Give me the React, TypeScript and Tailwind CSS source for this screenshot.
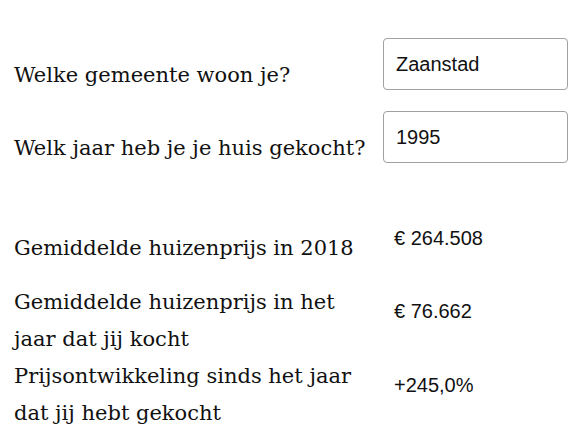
import React from 'react';

const serif = { fontFamily: '"DejaVu Serif", Georgia, serif' };

const results = [
  { label: ['Gemiddelde huizenprijs in 2018'], value: '€ 264.508', pb: 'pb-[20px]' },
  { label: ['Gemiddelde huizenprijs in het', 'jaar dat jij kocht'], value: '€ 76.662', pb: 'pb-[21px]' },
  { label: ['Prijsontwikkeling sinds het jaar', 'dat jij hebt gekocht'], value: '+245,0%', pb: 'pb-[20px]' },
];

export default function App() {
  return (
    <div className="w-[585px] h-[433px] bg-white overflow-hidden pl-[14px] pt-[38px] text-[#111]">
      <div className="flex flex-col gap-[21px]">
        <div className="flex items-start">
          <label className="w-[369px] h-[52px] pt-[19px] text-[21px] leading-[37px] whitespace-nowrap" style={serif}>
            Welke gemeente woon je?
          </label>
          <input
            readOnly
            value="Zaanstad"
            className="w-[185px] h-[52px] rounded-[4px] border border-[#a0a0a0] px-[12px] text-[20px] font-['Liberation_Sans',Arial,sans-serif] outline-none"
          />
        </div>
        <div className="flex items-start">
          <label className="w-[369px] h-[52px] pt-[19px] text-[21px] leading-[37px] whitespace-nowrap" style={serif}>
            Welk jaar heb je je huis gekocht?
          </label>
          <input
            readOnly
            value="1995"
            className="w-[185px] h-[52px] rounded-[4px] border border-[#a0a0a0] px-[12px] text-[20px] font-['Liberation_Sans',Arial,sans-serif] outline-none"
          />
        </div>
      </div>

      <div className="mt-[63px] flex flex-col">
        {results.map((r, i) => (
          <div key={i} className={`flex items-center ${i === 0 ? 'mb-[14px]' : ''}`}>
            <div className="w-[380px] text-[21px] leading-[37px] whitespace-nowrap" style={serif}>
              {r.label.map((l) => (
                <div key={l}>{l}</div>
              ))}
            </div>
            <div className={`${r.pb} text-[20px] leading-[24px] font-['Liberation_Sans',Arial,sans-serif]`}>{r.value}</div>
          </div>
        ))}
      </div>
    </div>
  );
}
